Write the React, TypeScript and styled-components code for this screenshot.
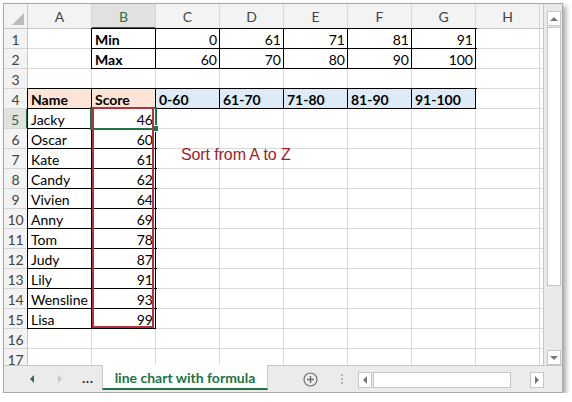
import React from 'react';
import styled, { createGlobalStyle } from 'styled-components';

const GREEN = '#217346';
const PEACH = '#fce4d6';
const BLUE = '#ddebf7';
const GRID = '#d9d9d9';

const COLS = ['A', 'B', 'C', 'D', 'E', 'F', 'G', 'H', ''];
const ROWS = Array.from({ length: 17 }, (_, i) => i + 1);

const students: [string, number][] = [
  ['Jacky', 46],
  ['Oscar', 60],
  ['Kate', 61],
  ['Candy', 62],
  ['Vivien', 64],
  ['Anny', 69],
  ['Tom', 78],
  ['Judy', 87],
  ['Lily', 91],
  ['Wensline', 93],
  ['Lisa', 99],
];

const mins = [0, 61, 71, 81, 91];
const maxs = [60, 70, 80, 90, 100];
const ranges = ['0-60', '61-70', '71-80', '81-90', '91-100'];

type CellData = {
  v?: string | number;
  bold?: boolean;
  right?: boolean;
  fill?: string;
  box?: boolean;
};

const cellAt = (r: number, c: number): CellData => {
  if (r === 1 || r === 2) {
    if (c === 1) return { v: r === 1 ? 'Min' : 'Max', bold: true, box: true };
    if (c >= 2 && c <= 6) return { v: (r === 1 ? mins : maxs)[c - 2], right: true, box: true };
  }
  if (r === 4) {
    if (c === 0) return { v: 'Name', bold: true, fill: PEACH, box: true };
    if (c === 1) return { v: 'Score', bold: true, fill: PEACH, box: true };
    if (c <= 6) return { v: ranges[c - 2], bold: true, fill: BLUE, box: true };
  }
  if (r >= 5 && r <= 15) {
    const [name, score] = students[r - 5];
    if (c === 0) return { v: name, box: true };
    if (c === 1) return { v: score, right: true, box: true };
  }
  return {};
};

const App: React.FC = () => {
  return (
    <>
      <GlobalStyle />
      <Window>
        <Main>
          <Sheet>
            <Grid>
              <Corner />
              {COLS.map((col, i) => (
                <ColHead key={i} $sel={col === 'B'}>
                  {col}
                </ColHead>
              ))}
              {ROWS.map((r) => (
                <React.Fragment key={r}>
                  <RowHead $sel={r === 5}>{r}</RowHead>
                  {COLS.map((_, c) => {
                    const d = cellAt(r, c);
                    return (
                      <Cell
                        key={c}
                        $box={d.box}
                        $bold={d.bold}
                        $right={d.right}
                        $fill={d.fill}
                      >
                        {d.v}
                      </Cell>
                    );
                  })}
                </React.Fragment>
              ))}
            </Grid>
            <Selection>
              <FillHandle />
            </Selection>
            <RedBox />
            <Note>Sort from A to Z</Note>
          </Sheet>
          <VScroll>
            <ScrollBtn>
              <Tri $dir="up" />
            </ScrollBtn>
            <VThumb />
            <Track />
            <ScrollBtn>
              <Tri $dir="down" />
            </ScrollBtn>
          </VScroll>
        </Main>
        <TabBar>
          <NavArea>
            <Tri $dir="left" $color={GREEN} />
            <Tri $dir="right" $color="#c8c8c8" />
            <Ellipsis>...</Ellipsis>
          </NavArea>
          <SheetTab>line chart with formula</SheetTab>
          <Tools>
            <svg width="15" height="15" viewBox="0 0 15 15">
              <circle cx="7.5" cy="7.5" r="6.5" fill="none" stroke="#6d6d6d" strokeWidth="1.2" />
              <path d="M7.5 4v7M4 7.5h7" stroke="#6d6d6d" strokeWidth="1.4" />
            </svg>
            <Dots>
              <i />
              <i />
              <i />
            </Dots>
          </Tools>
          <HScroll>
            <ScrollBtn>
              <Tri $dir="left" />
            </ScrollBtn>
            <HThumb />
            <Track />
            <ScrollBtn>
              <Tri $dir="right" />
            </ScrollBtn>
          </HScroll>
        </TabBar>
      </Window>
    </>
  );
};

export default App;

const GlobalStyle = createGlobalStyle`
  html, body {
    margin: 0;
    padding: 0;
    background: #fff;
  }
  body {
    font-family: Lato, "Liberation Sans", sans-serif;
  }
`;

const Window = styled.div`
  box-sizing: border-box;
  width: 560px;
  height: 390px;
  margin: 3px 0 0 3px;

  display: flex;
  flex-direction: column;

  border: 1px solid #a9a9a9;
  background: #fff;
  box-shadow: 3px 3px 5px rgba(0, 0, 0, 0.35);
`;

const Main = styled.div`
  display: flex;
  height: 361px;
`;

const Sheet = styled.div`
  position: relative;
  width: 539px;
  height: 361px;
  overflow: hidden;
`;

const Grid = styled.div`
  display: grid;
  grid-template-columns: 24px repeat(9, 64px);
  grid-template-rows: 25px repeat(17, 20px);
`;

const HeadBase = styled.div`
  box-sizing: border-box;
  display: flex;
  align-items: center;
  justify-content: center;
  background: #f3f3f3;
  color: #444;
  font-size: 14px;
`;

const Corner = styled(HeadBase)`
  position: relative;
  border-right: 1px solid #c6c6c6;
  border-bottom: 1px solid #c6c6c6;

  &::after {
    content: '';
    position: absolute;
    right: 3px;
    bottom: 3px;
    border-left: 12px solid transparent;
    border-bottom: 12px solid #bcbcbc;
  }
`;

const ColHead = styled(HeadBase)<{ $sel?: boolean }>`
  border-right: 1px solid #d6d6d6;
  border-bottom: ${(p) => (p.$sel ? `2px solid ${GREEN}` : '1px solid #c6c6c6')};
  background: ${(p) => (p.$sel ? '#e1e1e1' : '#f3f3f3')};
  color: ${(p) => (p.$sel ? GREEN : '#444')};
  padding-top: 1px;
`;

const RowHead = styled(HeadBase)<{ $sel?: boolean }>`
  border-right: ${(p) => (p.$sel ? `2px solid ${GREEN}` : '1px solid #c6c6c6')};
  border-bottom: 1px solid #d6d6d6;
  background: ${(p) => (p.$sel ? '#e1e1e1' : '#f3f3f3')};
  color: ${(p) => (p.$sel ? GREEN : '#444')};
  padding-top: 1px;
`;

const Cell = styled.div<{ $box?: boolean; $bold?: boolean; $right?: boolean; $fill?: string }>`
  box-sizing: border-box;
  display: flex;
  align-items: center;
  justify-content: ${(p) => (p.$right ? 'flex-end' : 'flex-start')};
  padding: 2px 2px 0 3px;

  border-right: 1px solid ${(p) => (p.$box ? '#000' : GRID)};
  border-bottom: 1px solid ${(p) => (p.$box ? '#000' : GRID)};
  box-shadow: ${(p) => (p.$box ? '0 0 0 1px #000' : 'none')};
  background: ${(p) => p.$fill || '#fff'};

  color: #000;
  font-size: 14px;
  font-weight: ${(p) => (p.$bold ? 700 : 400)};
  white-space: nowrap;
  overflow: hidden;
`;

const Selection = styled.div`
  position: absolute;
  left: 86px;
  top: 103px;
  width: 67px;
  height: 23px;
  box-sizing: border-box;
  border: 2px solid ${GREEN};
`;

const FillHandle = styled.div`
  position: absolute;
  right: -4px;
  bottom: -4px;
  width: 5px;
  height: 5px;
  background: ${GREEN};
  border: 1px solid #fff;
`;

const RedBox = styled.div`
  position: absolute;
  left: 88px;
  top: 103px;
  width: 62px;
  height: 221px;
  box-sizing: border-box;
  border: 2px solid #b2333d;
`;

const Note = styled.div`
  position: absolute;
  left: 177px;
  top: 142px;
  font-family: "Liberation Sans", Arial, sans-serif;
  font-size: 16px;
  letter-spacing: -0.1px;
  line-height: 17px;
  color: #a11d29;
  white-space: nowrap;
`;

const VScroll = styled.div`
  box-sizing: border-box;
  width: 19px;
  display: flex;
  flex-direction: column;
  padding: 7px 1px 0 3px;
  border-left: 1px solid #c6c6c6;
  background: #e9e9e9;
`;

const ScrollBtn = styled.div`
  box-sizing: border-box;
  flex: none;
  width: 14px;
  height: 15px;
  display: flex;
  align-items: center;
  justify-content: center;
  background: #fff;
  border: 1px solid #c6c6c6;
`;

const Tri = styled.span<{ $dir: 'up' | 'down' | 'left' | 'right'; $color?: string }>`
  width: 0;
  height: 0;
  ${(p) => {
    const c = p.$color || '#777';
    switch (p.$dir) {
      case 'up':
        return `border-left: 4px solid transparent; border-right: 4px solid transparent; border-bottom: 4px solid ${c};`;
      case 'down':
        return `border-left: 4px solid transparent; border-right: 4px solid transparent; border-top: 4px solid ${c};`;
      case 'left':
        return `border-top: 4px solid transparent; border-bottom: 4px solid transparent; border-right: 4px solid ${c};`;
      default:
        return `border-top: 4px solid transparent; border-bottom: 4px solid transparent; border-left: 4px solid ${c};`;
    }
  }}
`;

const VThumb = styled.div`
  box-sizing: border-box;
  height: 259px;
  margin-top: 1px;
  background: #fff;
  border: 1px solid #c6c6c6;
`;

const Track = styled.div`
  flex: 1;
`;

const TabBar = styled.div`
  box-sizing: border-box;
  height: 27px;
  display: flex;
  border-top: 1px solid #c6c6c6;
  background: #ebebeb;
`;

const NavArea = styled.div`
  width: 98px;
  display: flex;
  align-items: center;
  padding-left: 26px;
  box-sizing: border-box;

  & > span:nth-child(2) {
    margin-left: 24px;
  }
`;

const Ellipsis = styled.span`
  margin-left: 20px;
  margin-top: -4px;
  font-weight: 700;
  font-size: 14px;
  color: #333;
  letter-spacing: 0.5px;
`;

const SheetTab = styled.div`
  box-sizing: border-box;
  width: 166px;
  height: 25px;
  margin-top: -1px;
  display: flex;
  align-items: center;
  justify-content: center;
  padding-top: 1px;

  background: #fff;
  border-left: 1px solid #c6c6c6;
  border-right: 1px solid #c6c6c6;
  border-bottom: 2px solid ${GREEN};

  color: ${GREEN};
  font-size: 14px;
  font-weight: 700;
`;

const Tools = styled.div`
  width: 90px;
  display: flex;
  align-items: center;
  padding-left: 35px;
  box-sizing: border-box;
  gap: 23px;
`;

const Dots = styled.div`
  display: flex;
  flex-direction: column;
  gap: 2px;

  & > i {
    width: 2px;
    height: 2px;
    background: #b5b5b5;
  }
`;

const HScroll = styled.div`
  width: 186px;
  height: 16px;
  margin-top: 6px;
  display: flex;

  & > div:first-child,
  & > div:last-child {
    height: 16px;
  }
`;

const HThumb = styled.div`
  box-sizing: border-box;
  width: 138px;
  margin-left: 1px;
  background: #fff;
  border: 1px solid #c6c6c6;
`;
